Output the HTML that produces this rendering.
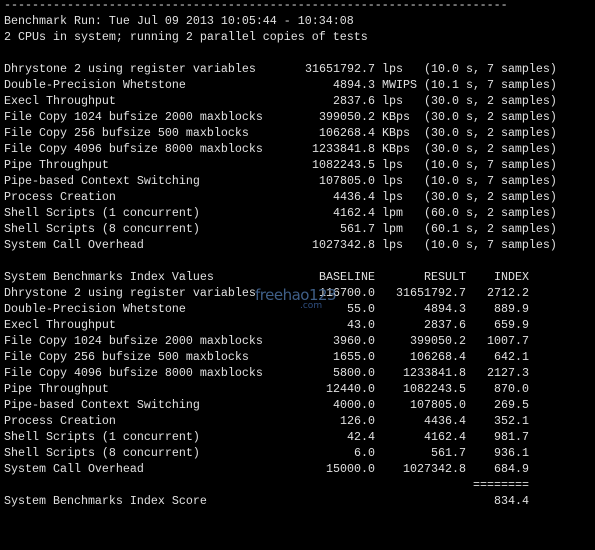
<!DOCTYPE html>
<html><head><meta charset="utf-8"><style>
html,body{margin:0;padding:0;background:#000;width:595px;height:550px;overflow:hidden;}
#t{position:absolute;left:4px;top:-3px;font-family:"Liberation Mono",monospace;font-size:11.67px;line-height:16px;color:#e0e0e0;}
.l{height:16px;white-space:pre;}
.n{display:inline-block;width:287px;}
.v{display:inline-block;width:84px;text-align:right;}
.u{display:inline-block;width:49px;}
.m{display:inline-block;width:280px;}
.b{display:inline-block;width:91px;text-align:right;}
.i{display:inline-block;width:63px;text-align:right;}
#wm{position:absolute;left:255px;top:286px;font-family:"DejaVu Sans",sans-serif;font-size:15px;color:#3f5f88;letter-spacing:-0.5px;}
#wm2{position:absolute;left:300px;top:301px;font-family:"DejaVu Sans",sans-serif;font-size:9px;color:#2f4f80;}
</style></head><body>
<div id="t"><div class="l">------------------------------------------------------------------------</div><div class="l">Benchmark Run: Tue Jul 09 2013 10:05:44 - 10:34:08</div><div class="l">2 CPUs in system; running 2 parallel copies of tests</div><div class="l"> </div><div class="l"><span class="n">Dhrystone 2 using register variables</span><span class="v">31651792.7</span><span class="u"> lps</span>(10.0 s, 7 samples)</div><div class="l"><span class="n">Double-Precision Whetstone</span><span class="v">4894.3</span><span class="u"> MWIPS</span>(10.1 s, 7 samples)</div><div class="l"><span class="n">Execl Throughput</span><span class="v">2837.6</span><span class="u"> lps</span>(30.0 s, 2 samples)</div><div class="l"><span class="n">File Copy 1024 bufsize 2000 maxblocks</span><span class="v">399050.2</span><span class="u"> KBps</span>(30.0 s, 2 samples)</div><div class="l"><span class="n">File Copy 256 bufsize 500 maxblocks</span><span class="v">106268.4</span><span class="u"> KBps</span>(30.0 s, 2 samples)</div><div class="l"><span class="n">File Copy 4096 bufsize 8000 maxblocks</span><span class="v">1233841.8</span><span class="u"> KBps</span>(30.0 s, 2 samples)</div><div class="l"><span class="n">Pipe Throughput</span><span class="v">1082243.5</span><span class="u"> lps</span>(10.0 s, 7 samples)</div><div class="l"><span class="n">Pipe-based Context Switching</span><span class="v">107805.0</span><span class="u"> lps</span>(10.0 s, 7 samples)</div><div class="l"><span class="n">Process Creation</span><span class="v">4436.4</span><span class="u"> lps</span>(30.0 s, 2 samples)</div><div class="l"><span class="n">Shell Scripts (1 concurrent)</span><span class="v">4162.4</span><span class="u"> lpm</span>(60.0 s, 2 samples)</div><div class="l"><span class="n">Shell Scripts (8 concurrent)</span><span class="v">561.7</span><span class="u"> lpm</span>(60.1 s, 2 samples)</div><div class="l"><span class="n">System Call Overhead</span><span class="v">1027342.8</span><span class="u"> lps</span>(10.0 s, 7 samples)</div><div class="l"> </div><div class="l"><span class="m">System Benchmarks Index Values</span><span class="b">BASELINE</span><span class="b">RESULT</span><span class="i">INDEX</span></div><div class="l"><span class="m">Dhrystone 2 using register variables</span><span class="b">116700.0</span><span class="b">31651792.7</span><span class="i">2712.2</span></div><div class="l"><span class="m">Double-Precision Whetstone</span><span class="b">55.0</span><span class="b">4894.3</span><span class="i">889.9</span></div><div class="l"><span class="m">Execl Throughput</span><span class="b">43.0</span><span class="b">2837.6</span><span class="i">659.9</span></div><div class="l"><span class="m">File Copy 1024 bufsize 2000 maxblocks</span><span class="b">3960.0</span><span class="b">399050.2</span><span class="i">1007.7</span></div><div class="l"><span class="m">File Copy 256 bufsize 500 maxblocks</span><span class="b">1655.0</span><span class="b">106268.4</span><span class="i">642.1</span></div><div class="l"><span class="m">File Copy 4096 bufsize 8000 maxblocks</span><span class="b">5800.0</span><span class="b">1233841.8</span><span class="i">2127.3</span></div><div class="l"><span class="m">Pipe Throughput</span><span class="b">12440.0</span><span class="b">1082243.5</span><span class="i">870.0</span></div><div class="l"><span class="m">Pipe-based Context Switching</span><span class="b">4000.0</span><span class="b">107805.0</span><span class="i">269.5</span></div><div class="l"><span class="m">Process Creation</span><span class="b">126.0</span><span class="b">4436.4</span><span class="i">352.1</span></div><div class="l"><span class="m">Shell Scripts (1 concurrent)</span><span class="b">42.4</span><span class="b">4162.4</span><span class="i">981.7</span></div><div class="l"><span class="m">Shell Scripts (8 concurrent)</span><span class="b">6.0</span><span class="b">561.7</span><span class="i">936.1</span></div><div class="l"><span class="m">System Call Overhead</span><span class="b">15000.0</span><span class="b">1027342.8</span><span class="i">684.9</span></div><div class="l"><span class="m"></span><span class="b"></span><span class="b"></span><span class="i">========</span></div><div class="l"><span class="m">System Benchmarks Index Score</span><span class="b"></span><span class="b"></span><span class="i">834.4</span></div></div>
<div id="wm">freehao123</div>
<div id="wm2">.com</div>
</body></html>
